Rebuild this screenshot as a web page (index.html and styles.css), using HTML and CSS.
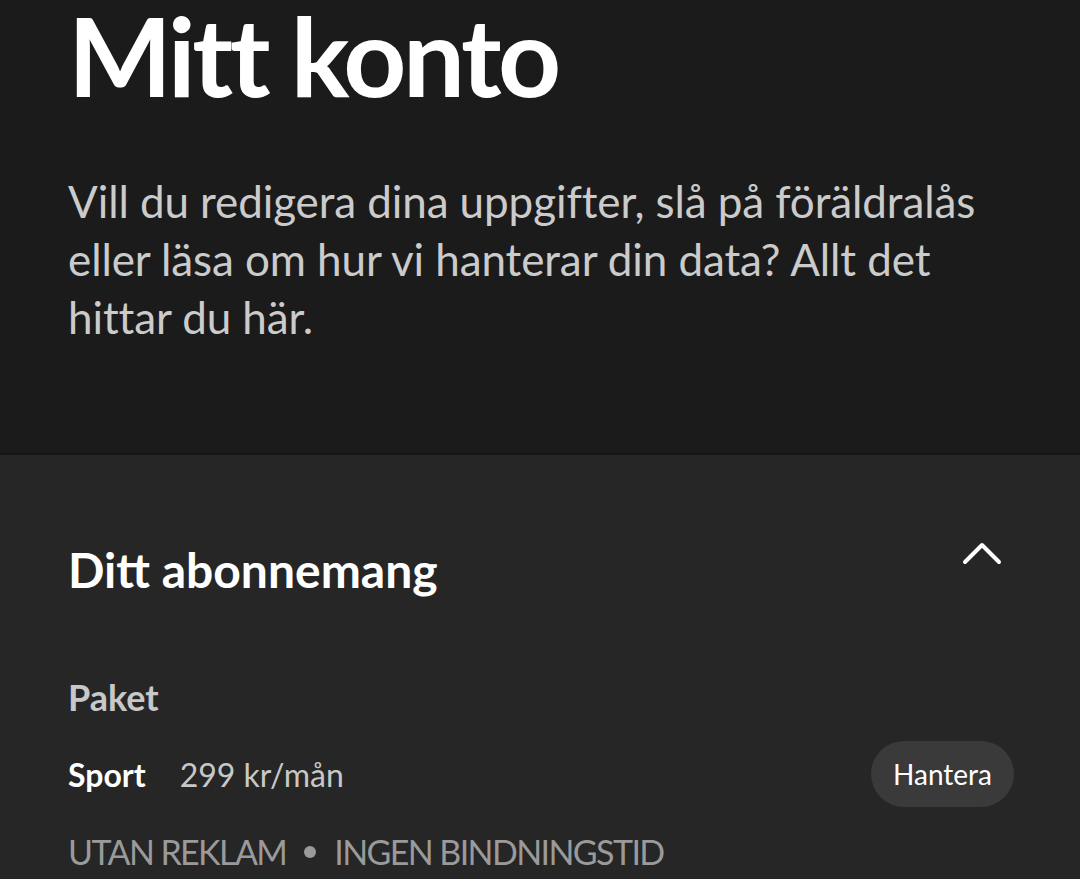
FILE: index.html
```html
<!DOCTYPE html>
<html lang="sv">
<head>
<meta charset="utf-8">
<link rel="stylesheet" href="styles.css">
</head>
<body>
<header class="hero">
  <h1 class="title">Mitt konto</h1>
  <p class="lead">Vill du redigera dina uppgifter, slå på föräldralås eller läsa om hur vi hanterar din data? Allt det hittar du här.</p>
</header>
<section class="panel">
  <div class="panel-head">
    <h2 class="panel-title">Ditt abonnemang</h2>
    <svg class="chevron" width="40" height="24" viewBox="0 0 40 24"><path d="M3 21 L20 4 L37 21" fill="none" stroke="#fff" stroke-width="4" stroke-linecap="round" stroke-linejoin="round"/></svg>
  </div>
  <div class="label">Paket</div>
  <div class="plan-row">
    <div class="plan"><span class="plan-name">Sport</span><span class="plan-price">299 kr/mån</span></div>
    <button class="btn">Hantera</button>
  </div>
  <div class="features">UTAN REKLAM <span class="dot"></span> INGEN BINDNINGSTID</div>
</section>
</body>
</html>
```
FILE: styles.css
```css
html, body { margin: 0; padding: 0; }
body {
  background: #262626;
  font-family: Lato, "Noto Sans", sans-serif;
  width: 1080px;
  height: 879px;
  overflow: hidden;
}
.hero {
  background: #1b1b1b;
  height: 455px;
  padding: 0 68px;
  box-sizing: border-box;
  border-bottom: 3px solid #171717;
  display: flow-root;
}
.title {
  margin: 0;
  font-size: 110px;
  line-height: 108px;
  font-weight: 700;
  color: #fff;
  letter-spacing: -3.4px;
}
.lead {
  margin: 64px 0 0;
  font-size: 44px;
  line-height: 58px;
  color: #cbcbcb;
  font-weight: 400;
  letter-spacing: -0.1px;
  max-width: 930px;
}
.panel { padding: 0 66px 0 68px; }
.panel-head {
  display: flex;
  justify-content: space-between;
  align-items: flex-start;
  padding-top: 85px;
}
.panel-title {
  margin: 0;
  font-size: 48px;
  line-height: 60px;
  font-weight: 700;
  color: #fff;
}
.chevron { margin-top: 1px; margin-right: 12px; }
.label {
  margin-top: 75px;
  font-size: 36px;
  line-height: 44px;
  font-weight: 700;
  color: #c8c8c8;
}
.plan-row {
  display: flex;
  justify-content: space-between;
  align-items: center;
  margin-top: 22px;
}
.plan { display: flex; align-items: baseline; gap: 34px; }
.plan-name { font-size: 32px; font-weight: 700; color: #fff; }
.plan-price { font-size: 32px; color: #c8c8c8; }
.btn {
  background: #3a3a3a;
  color: #fff;
  border: none;
  border-radius: 33px;
  height: 66px;
  padding: 0 22px;
  font-family: inherit;
  font-size: 28px;
}
.features {
  margin-top: 24px;
  font-size: 34px;
  letter-spacing: -1.6px;
  color: #9a9a9a;
  display: flex;
  align-items: center;
  gap: 18px;
}
.dot {
  width: 12px; height: 12px; border-radius: 50%;
  background: #9a9a9a;
  display: inline-block;
}
```
